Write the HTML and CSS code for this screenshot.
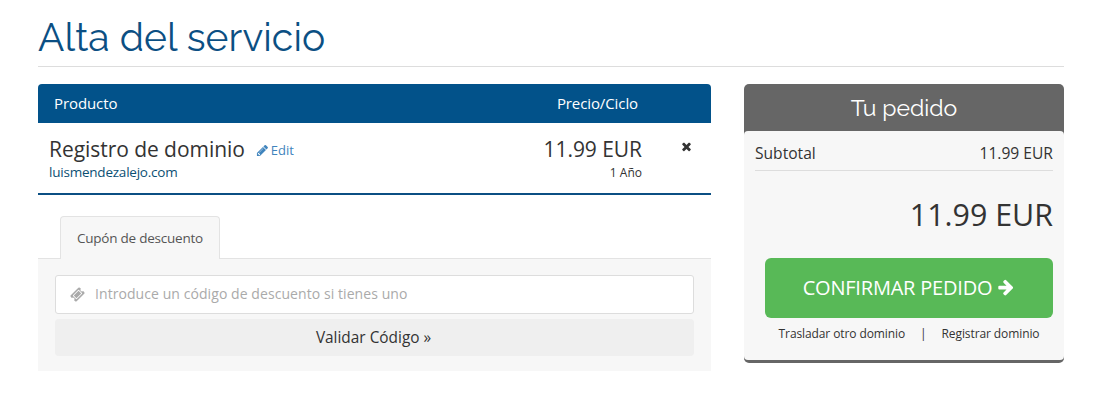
FILE: index.html
```html
<!DOCTYPE html>
<html lang="es">
<head>
  <meta charset="UTF-8">
  <title>Alta del servicio</title>
  <link rel="stylesheet" href="styles.css">
</head>
<body>
  <div class="container">
    <h1>Alta del servicio</h1>

    <div class="row">
      <div class="cart">
        <div class="cart-header">
          <span>Producto</span>
          <span>Precio/Ciclo</span>
        </div>

        <div class="item">
          <div class="item-info">
            <div class="item-title">
              <span class="item-name">Registro de dominio</span>
              <a href="#" class="edit">
                <svg viewBox="0 0 1792 1792"><path d="M491 1536l91-91-235-235-91 91v107h128v128h107zm523-928q0-22-22-22-10 0-17 7l-542 542q-7 7-7 17 0 22 22 22 10 0 17-7l542-542q7-7 7-17zm-54-192l416 416-832 832h-416v-416zm683 96q0 53-37 90l-166 166-416-416 166-165q36-38 90-38 53 0 91 38l235 234q37 39 37 91z"/></svg>
                <span>Edit</span>
              </a>
            </div>
            <div class="domain">luismendezalejo.com</div>
          </div>
          <div class="item-price">
            <div class="price">11.99 EUR</div>
            <div class="period">1 Año</div>
          </div>
          <button type="button" class="remove" aria-label="Eliminar">
            <svg viewBox="0 0 1792 1792"><path d="M1490 1322q0 40-28 68l-136 136q-28 28-68 28t-68-28l-294-294-294 294q-28 28-68 28t-68-28l-136-136q-28-28-28-68t28-68l294-294-294-294q-28-28-28-68t28-68l136-136q28-28 68-28t68 28l294 294 294-294q28-28 68-28t68 28l136 136q28 28 28 68t-28 68l-294 294 294 294q28 28 28 68z"/></svg>
          </button>
        </div>

        <div class="tabs">
          <a href="#" class="tab">Cupón de descuento</a>
        </div>
        <form class="coupon">
          <div class="field">
            <svg viewBox="0 0 1792 1792"><path d="M1024 452l316 316-572 572-316-316zm-211 979l618-618q19-19 19-45t-19-45l-362-362q-18-18-45-18t-45 18l-618 618q-19 19-19 45t19 45l362 362q18 18 45 18t45-18zm889-637l-907 908q-37 37-90.500 37t-90.500-37l-126-126q56-56 56-136t-56-136-136-56-136 56l-125-126q-37-37-37-90.500t37-90.500l907-906q37-37 90.500-37t90.500 37l125 125q-56 56-56 136t56 136 136 56 136-56l126 125q37 37 37 90.500t-37 90.500z"/></svg>
            <input type="text" placeholder="Introduce un código de descuento si tienes uno">
          </div>
          <button type="button" class="validate">Validar Código »</button>
        </form>
      </div>

      <div class="summary">
        <h2>Tu pedido</h2>
        <div class="summary-body">
          <div class="subtotal">
            <span>Subtotal</span>
            <span>11.99 EUR</span>
          </div>
          <div class="total">11.99 EUR</div>
          <a href="#" class="checkout">
            <span>CONFIRMAR PEDIDO</span>
            <svg viewBox="0 0 1792 1792"><path d="M1600 960q0 54-37 91l-651 651q-39 37-91 37-51 0-90-37l-75-75q-38-38-38-91t38-91l293-293h-704q-52 0-84.500-37.500t-32.500-90.500v-128q0-53 32.500-90.500t84.500-37.500h704l-293-294q-38-36-38-90t38-90l75-75q38-38 90-38 53 0 91 38l651 651q37 35 37 90z"/></svg>
          </a>
          <div class="links">
            <a href="#">Trasladar otro dominio</a>
            <span class="sep">|</span>
            <a href="#">Registrar dominio</a>
          </div>
        </div>
      </div>
    </div>
  </div>
</body>
</html>
```
FILE: styles.css
```css
* {
  box-sizing: border-box;
}

body {
  margin: 0;
  background: #fff;
  color: #333;
  font-family: "Open Sans", sans-serif;
  font-size: 15px;
}

a {
  text-decoration: none;
}

svg {
  display: block;
  fill: currentColor;
}

.container {
  width: 1026px;
  margin-left: 38px;
}

h1 {
  margin: 0 0 17px;
  height: 67px;
  padding-top: 14px;
  border-bottom: 1px solid #ddd;
  color: #0b4f83;
  font-family: Raleway, Lato, sans-serif;
  font-size: 39px;
  font-weight: 400;
  letter-spacing: 0.1px;
  line-height: 46px;
}

.row {
  display: flex;
  justify-content: space-between;
  align-items: flex-start;
}

.cart {
  width: 673px;
}

.cart-header {
  display: flex;
  justify-content: space-between;
  height: 39px;
  padding: 0 73px 0 16px;
  background: #02528a;
  border-radius: 4px 4px 0 0;
  color: #fff;
  font-weight: 500;
  letter-spacing: -0.1px;
  line-height: 39px;
}

.item {
  display: flex;
  height: 72px;
  padding: 11px 18px 0 11px;
  border-bottom: 2px solid #0b4f83;
}

.item-info {
  flex: 1;
}

.item-title {
  display: flex;
  align-items: center;
  height: 30px;
}

.item-name,
.price {
  font-size: 21px;
  letter-spacing: -0.05px;
  line-height: 30px;
}

.edit {
  display: flex;
  align-items: center;
  gap: 2px;
  margin: 2px 0 0 11px;
  color: #3f84bd;
  font-size: 13px;
}

.edit svg {
  width: 13px;
  height: 13px;
}

.domain {
  color: #0b4f73;
  font-size: 13.5px;
  letter-spacing: -0.22px;
  line-height: 17px;
}

.item-price {
  text-align: right;
}

.period {
  font-size: 12px;
  line-height: 17px;
}

.remove {
  width: 14px;
  height: 14px;
  margin: 5px 0 0 37px;
  padding: 0;
  background: none;
  border: 0;
  color: #333;
}

.remove svg {
  width: 13px;
  height: 13px;
  margin-left: 1px;
}

.tabs {
  display: flex;
  height: 64px;
  padding: 21px 0 0 22px;
  border-bottom: 1px solid #e3e3e3;
}

.tab {
  height: 43px;
  padding: 0 16px;
  background: #f7f7f7;
  border: 1px solid #e3e3e3;
  border-bottom: 0;
  border-radius: 4px 4px 0 0;
  color: #555;
  font-size: 13.5px;
  letter-spacing: -0.23px;
  line-height: 42px;
}

.coupon {
  height: 112px;
  padding: 16px 17px 0;
  background: #f7f7f7;
}

.field {
  display: flex;
  align-items: center;
  height: 39px;
  padding-left: 14px;
  background: #fff;
  border: 1px solid #ddd;
  border-radius: 3px;
  color: #aaa;
}

.field svg {
  width: 15px;
  height: 15px;
}

.field input {
  flex: 1;
  margin: 0 0 2px 10px;
  padding: 0;
  background: none;
  border: 0;
  font-family: inherit;
  font-size: 14px;
  letter-spacing: 0.07px;
}

.field input::placeholder {
  color: #aaa;
}

.validate {
  display: block;
  width: 100%;
  height: 37px;
  margin-top: 5px;
  padding: 0 2px 0 0;
  background: #efefef;
  border: 0;
  border-radius: 4px;
  color: #333;
  font-family: inherit;
  font-size: 15.4px;
  font-weight: 500;
}

.summary {
  width: 320px;
  background: #666;
  border-bottom: 3px solid #666;
  border-radius: 5px;
}

h2 {
  height: 47px;
  margin: 0;
  color: #fff;
  font-family: Raleway, Lato, sans-serif;
  font-size: 23px;
  font-weight: 400;
  line-height: 47px;
  text-align: center;
}

.summary-body {
  height: 229px;
  padding: 4px 11px 0;
  background: #f7f7f7;
  border-radius: 4px;
}

.subtotal {
  display: flex;
  justify-content: space-between;
  height: 36px;
  border-bottom: 1px solid #ddd;
  font-size: 15.6px;
  line-height: 37px;
}

.total {
  height: 87px;
  font-size: 30.4px;
  line-height: 88px;
  text-align: right;
}

.checkout {
  display: flex;
  align-items: center;
  justify-content: center;
  gap: 5px;
  height: 60px;
  margin-left: 10px;
  padding-bottom: 2px;
  background: #58b957;
  border-radius: 6px;
  color: #fff;
  font-size: 20px;
  letter-spacing: -0.2px;
}

.checkout svg {
  width: 18px;
  height: 18px;
}

.links {
  display: flex;
  justify-content: center;
  padding-left: 10px;
  font-size: 12px;
  letter-spacing: -0.1px;
  line-height: 31px;
}

.links a {
  color: #333;
}

.sep {
  margin: 0 15px;
}
```
